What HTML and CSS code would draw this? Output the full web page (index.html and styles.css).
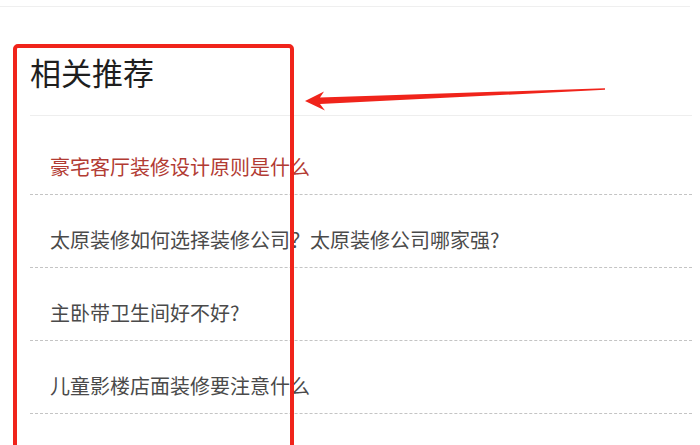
FILE: index.html
```html
<!DOCTYPE html>
<html lang="zh-CN">
<head>
    <meta charset="UTF-8">
    <meta name="viewport" content="width=device-width, initial-scale=1.0">
    <title>相关推荐</title>
    <link rel="stylesheet" href="styles.css">
</head>
<body>
    <div class="top-rule"></div>

    <div class="recommend">
        <h2 class="recommend-title">相关推荐</h2>
        <ul class="recommend-list">
            <li class="recommend-item active">豪宅客厅装修设计原则是什么</li>
            <li class="recommend-item">太原装修如何选择装修公司？太原装修公司哪家强?</li>
            <li class="recommend-item">主卧带卫生间好不好?</li>
            <li class="recommend-item">儿童影楼店面装修要注意什么</li>
        </ul>
    </div>

    <!-- annotation marks drawn over the page -->
    <div class="mark-box"></div>
    <svg class="mark-arrow" width="700" height="445" viewBox="0 0 700 445">
        <path d="M305 101 L324 91.5 L320 97.5 L605 88.3 L605 89.8 L320 104 L325 110.5 Z" fill="#f0241b"/>
    </svg>
</body>
</html>
```

FILE: styles.css
```css
* {
    margin: 0;
    padding: 0;
    box-sizing: border-box;
}

body {
    font-family: "Noto Sans CJK SC", "Noto Sans", sans-serif;
    background: #fff;
    color: #444;
    width: 700px;
    height: 445px;
    overflow: hidden;
    position: relative;
}

.top-rule {
    height: 7px;
    margin-right: 10px;
    border-bottom: 1px solid #efefef;
}

.recommend {
    padding: 0 8px 0 30px;
}

.recommend-title {
    margin-top: 45px;
    height: 64px;
    padding-bottom: 23px;
    font-size: 31px;
    line-height: 40px;
    font-weight: 400;
    color: #1e1e1e;
    border-bottom: 1px solid #eee;
}

.recommend-list {
    list-style: none;
    padding-top: 6px;
}

.recommend-item {
    padding: 33px 0 15px 20px;
    font-size: 20px;
    line-height: 24px;
    color: #4a4a4a;
    border-bottom: 1px dashed #c4c4c4;
}

.recommend-item.active {
    color: #b23b33;
}

.mark-box {
    position: absolute;
    left: 13px;
    top: 44px;
    width: 281px;
    height: 420px;
    border: 4px solid #f0241b;
    border-radius: 5px;
}

.mark-arrow {
    position: absolute;
    left: 0;
    top: 0;
}
```
